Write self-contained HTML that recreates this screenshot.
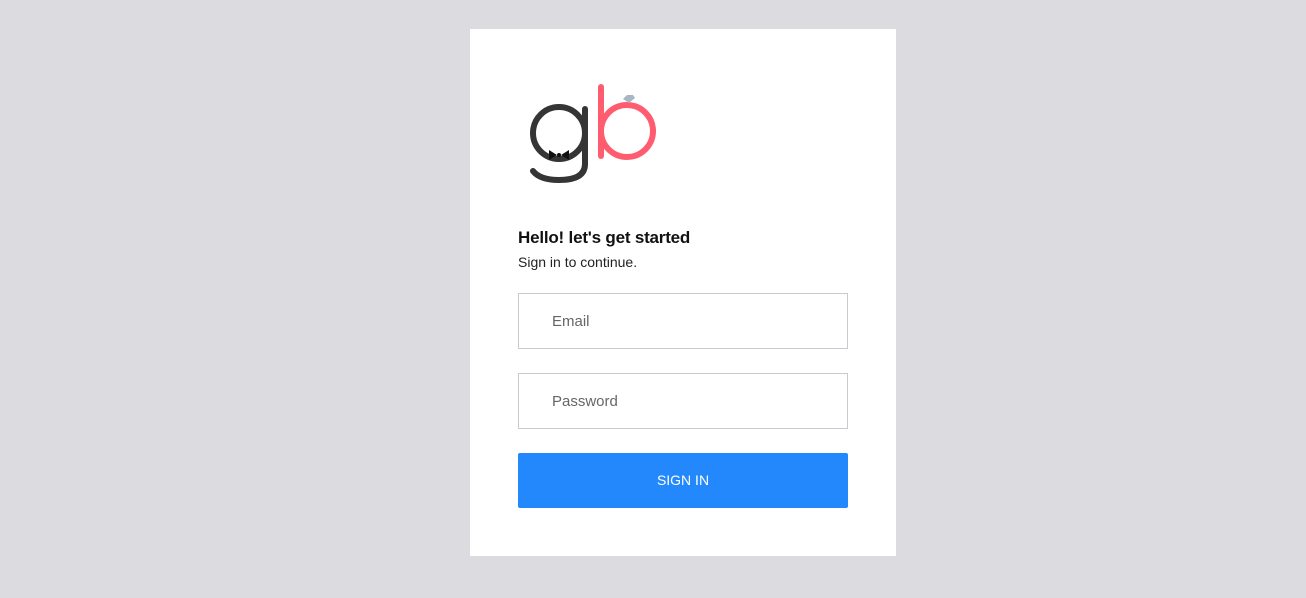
<!DOCTYPE html>
<html><head><style>
body{margin:0;background:#dcdbe0;font-family:"Liberation Sans",sans-serif;}
.card{position:absolute;left:470px;top:29px;width:426px;height:527px;background:#fff;}
h1{position:absolute;left:48px;top:199px;margin:0;font-size:17px;font-weight:bold;color:#111;letter-spacing:-0.2px;}
.sub{position:absolute;left:48px;top:225px;font-size:14px;color:#222;}
.in{position:absolute;left:48px;width:330px;height:56px;border:1px solid #c9c9cf;box-sizing:border-box;font-size:15px;color:#666;padding-left:33px;line-height:56px;}
.btn{position:absolute;left:48px;top:424px;width:330px;height:55px;background:#2488fd;border-radius:2px;color:#fff;font-size:14px;text-align:center;line-height:55px;}
</style></head><body>
<div class="card">
<svg style="position:absolute;left:0;top:0" width="426" height="180">
<g fill="none" stroke-linecap="round">
<circle cx="89" cy="104" r="26" stroke="#353535" stroke-width="6"/>
<path d="M115 80 V135 Q115 151 89 151 Q70 151 63 142" stroke="#353535" stroke-width="6"/>
<path d="M131 58 V127" stroke="#ff5c70" stroke-width="6"/>
<circle cx="157" cy="102" r="26" stroke="#ff5c70" stroke-width="6"/>
</g>
<path d="M79 121 L87 126 L79 131Z M99 121 L91 126 L99 131Z" fill="#111"/><circle cx="89" cy="126" r="2" fill="#111"/>
<path d="M153 70 L157 66 L163 66 L165 69 L159 74Z" fill="#a9b6c4"/>
</svg>
<h1>Hello! let's get started</h1>
<div class="sub">Sign in to continue.</div>
<div class="in" style="top:264px">Email</div>
<div class="in" style="top:344px">Password</div>
<div class="btn">SIGN IN</div>
</div>
</body></html>
